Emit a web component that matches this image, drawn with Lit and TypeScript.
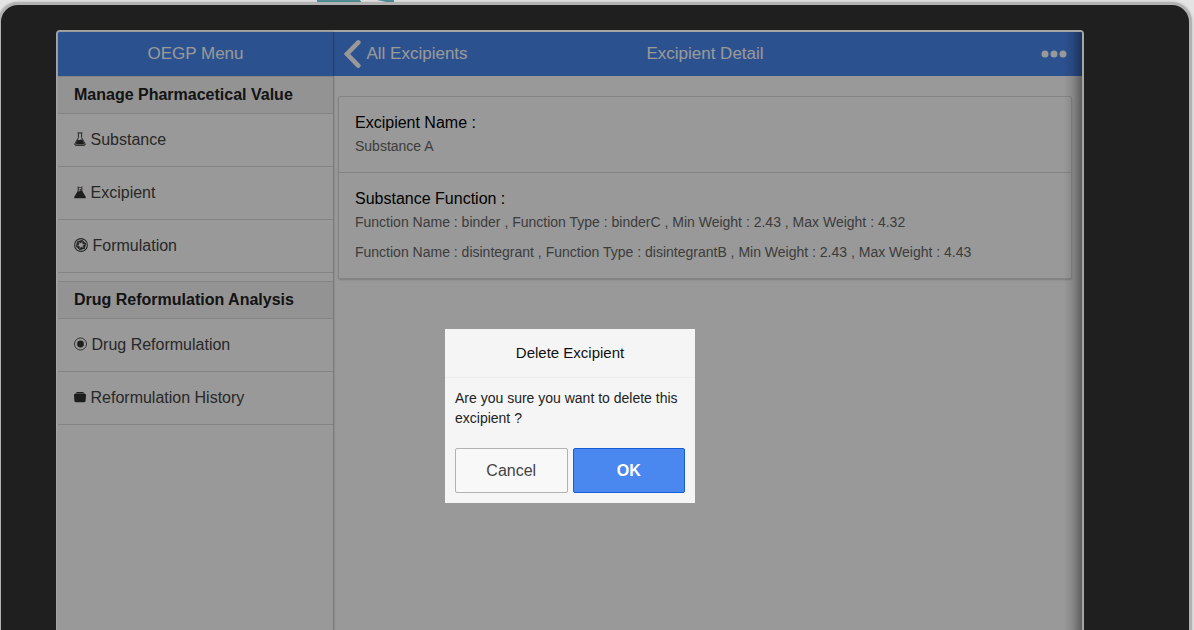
import { LitElement, html, css, svg } from "lit";
import { customElement } from "lit/decorators.js";

const blade = "M3.9 3.4 8.6 2.1 6.9 4.9Z";
const icons = {
  flask: svg`<path d="M4.4 1V5.6L.9 11.8Q.4 13.4 1.6 13.4H10.4Q11.6 13.4 11.1 11.8L7.6 5.6V1" fill="none" stroke="#444" stroke-width="1"/><path d="M3.6 .9H8.4" stroke="#444"/><path d="M3.6 7.6 5 8.3 6.8 7.4 8.4 7.8 10.6 12.6H1.4Z" fill="#333"/>`,
  beaker: svg`<path d="M4.2 1.5V6.3M7.8 1.5V6.3" stroke="#444" stroke-width="1.1"/><path d="M5.4 2.6H6.6M5.6 4.8H7" stroke="#444" stroke-width="1.2"/><path d="M3.7 6 5 6.6 6.5 5.6 8.3 6 11.8 12Q12.2 13.2 11 13.2H1Q-.2 13.2 .2 12Z" fill="#333"/>`,
  aperture: svg`<circle cx="7" cy="7" r="6.4" fill="none" stroke="#444" stroke-width="1.1"/><g fill="#333" stroke="#333" stroke-width=".5">${[0, 60, 120, 180, 240, 300].map((a) => svg`<path d=${blade} transform="rotate(${a} 7 7)"/>`)}</g>`,
  disc: svg`<circle cx="6.5" cy="7" r="6" fill="none" stroke="#444" stroke-width=".9"/><circle cx="6.5" cy="7" r="3.4" fill="#333"/>`,
  box: svg`<path d="M1.4 3.5Q2 2 3.6 2H8.4Q10 2 10.6 3.5Z" fill="#333"/><path d="M0 5Q0 3.8 1.2 3.8H10.8Q12 3.8 12 5L11.6 10.8Q11.5 12.2 10.2 12.2H1.8Q.5 12.2 .4 10.8Z" fill="#333"/>`,
};

const groups = [
  {
    title: "Manage Pharmacetical Value",
    items: [
      { icon: icons.flask, label: "Substance", w: 12 },
      { icon: icons.beaker, label: "Excipient", w: 12 },
      { icon: icons.aperture, label: "Formulation", w: 14 },
    ],
  },
  {
    title: "Drug Reformulation Analysis",
    items: [
      { icon: icons.disc, label: "Drug Reformulation", w: 13 },
      { icon: icons.box, label: "Reformulation History", w: 12 },
    ],
  },
];

@customElement("side-menu")
class SideMenu extends LitElement {
  static styles = css`
    :host { display: flex; flex-direction: column; width: 275px; flex: none; border-right: 1px solid rgba(0, 0, 0, .2); background: linear-gradient(#4a87ee 44px, #fff 44px); box-shadow: 0 0 2px rgba(0, 0, 0, .2); position: relative; }
    .bar { height: 44px; display: flex; align-items: center; justify-content: center; background: #4a87ee; color: #fff; font-size: 17px; }
    .bar span { padding-bottom: 1px; }
    .group { margin-bottom: 8px; }
    .title { box-sizing: border-box; height: 38px; line-height: 35px; padding-left: 16px; border: solid #ddd; border-width: 1px 0; background: #f5f5f5; color: #222; font-size: 16px; font-weight: bold; }
    .item { box-sizing: border-box; height: 53px; display: flex; align-items: center; padding-left: 16px; gap: 4.5px; border-bottom: 1px solid #ddd; color: #444; font-size: 16px; }
    .item span { padding-bottom: 1px; }
    .item svg { padding-bottom: 1px; overflow: visible; }
  `;
  render() {
    return html`
      <div class="bar"><span>OEGP Menu</span></div>
      ${groups.map((g) => html`<div class="group">
        <div class="title">${g.title}</div>
        ${g.items.map((i) => html`<div class="item">
          <svg width=${i.w} height="15" viewBox="0 0 ${i.w} 15">${i.icon}</svg><span>${i.label}</span>
        </div>`)}
      </div>`)}
    `;
  }
}

@customElement("excipient-detail")
class ExcipientDetail extends LitElement {
  static styles = css`
    :host { display: flex; flex-direction: column; flex: 1; min-width: 0; }
    .bar { height: 44px; display: grid; grid-template-columns: 1fr auto 1fr; align-items: center; background: #4a87ee; color: #fff; font-size: 17px; padding: 0 15px 0 10px; }
    .back { display: flex; align-items: center; gap: 5.5px; }
    .bar span { padding-bottom: 1px; }
    .heading { margin-right: 1px; }
    .more { justify-self: end; }
    .card { margin: 20px 10px 0 4px; border: 1px solid #ddd; border-radius: 2px; box-shadow: 0 1px 2px rgba(0, 0, 0, .2); background: #fff; font-size: 14px; color: #666; }
    .section { padding: 16px; }
    .section + .section { border-top: 1px solid #ddd; }
    .name { height: 20px; line-height: 19px; font-size: 16px; color: #000; }
    .line { height: 20px; line-height: 20px; margin-top: 3px; white-space: pre; }
    .line + .line { margin-top: 10px; }
  `;
  render() {
    return html`
      <div class="bar">
        <div class="back">
          <svg width="17" height="30" viewBox="0 0 17 30"><path d="M14.3 3.4 3 15 14.3 26.6" fill="none" stroke="#fff" stroke-width="4.6" stroke-linecap="round"/></svg>
          <span>All Excipients</span>
        </div>
        <span class="heading">Excipient Detail</span>
        <svg class="more" width="26" height="8" viewBox="0 0 26 8" fill="#fff"><circle cx="4" cy="4" r="3.5"/><circle cx="13" cy="4" r="3.5"/><circle cx="22" cy="4" r="3.5"/></svg>
      </div>
      <div class="card">
        <div class="section">
          <div class="name">Excipient Name :</div>
          <div class="line">Substance A</div>
        </div>
        <div class="section">
          <div class="name">Substance Function :</div>
          <div class="line">Function Name : binder , Function Type : binderC , Min Weight : 2.43 , Max Weight : 4.32</div>
          <div class="line">Function Name : disintegrant , Function Type : disintegrantB , Min Weight : 2.43 , Max Weight : 4.43</div>
        </div>
      </div>
    `;
  }
}

@customElement("confirm-popup")
class ConfirmPopup extends LitElement {
  static styles = css`
    :host { display: block; width: 250px; height: 174px; background: #f5f5f5; color: #111; }
    .head { box-sizing: border-box; height: 49px; line-height: 48px; border-bottom: 1px solid #eee; text-align: center; font-size: 15px; }
    .body { height: 60px; padding: 10px 10px 0; box-sizing: border-box; font-size: 14px; line-height: 20px; color: #222; }
    .buttons { display: flex; gap: 5px; padding: 10px; }
    .btn { box-sizing: border-box; height: 45px; flex: 1; border: 1px solid #b2b2b2; border-radius: 2px; background: #f8f8f8; color: #444; font: inherit; font-size: 16px; padding: 1px 0 0; }
    .ok { border-color: #145fd7; background: #4a87ee; color: #fff; font-weight: bold; }
  `;
  render() {
    return html`
      <div class="head">Delete Excipient</div>
      <div class="body">Are you sure you want to delete this excipient ?</div>
      <div class="buttons"><button class="btn">Cancel</button><button class="btn ok">OK</button></div>
    `;
  }
}

@customElement("app-root")
class AppRoot extends LitElement {
  static styles = css`
    :host { display: block; position: relative; width: 1194px; height: 630px; overflow: hidden; background: #e4e4e4; font-family: "Liberation Sans", Arial, sans-serif; }
    .art { position: absolute; left: 317px; top: 0; }
    .tablet { position: relative; box-sizing: border-box; width: 1194px; height: 800px; margin: 2px 0 0 -2px; border: 3px solid #b2b2b2; border-radius: 20px; background: #1f1f1f; box-shadow: 0 0 3px rgba(0, 0, 0, .2); padding: 25px 0 0 55px; }
    .screen { position: relative; display: flex; width: 1024px; height: 768px; border: 2px solid #a6a6a4; border-radius: 4px; background: #fff; }
    .edge { position: absolute; top: 0; right: 0; bottom: 0; width: 18px; background: linear-gradient(to right, transparent, rgba(0, 0, 0, .1) 45%, rgba(0, 0, 0, .38)); }
    .shade { position: absolute; inset: 0; background: rgba(0, 0, 0, .4); border-radius: 2px; }
    .popup { position: absolute; left: 387px; top: 297px; }
  `;
  render() {
    return html`
      <svg class="art" width="78" height="3" viewBox="0 0 78 3" fill="#55909a"><path d="M0 0H43L45 3H0ZM60 0H77V3Q68 2 60 0Z"/></svg>
      <div class="tablet">
        <div class="screen">
          <side-menu></side-menu>
          <excipient-detail></excipient-detail>
          <div class="edge"></div>
          <div class="shade"></div>
          <confirm-popup class="popup"></confirm-popup>
        </div>
      </div>
    `;
  }
}
